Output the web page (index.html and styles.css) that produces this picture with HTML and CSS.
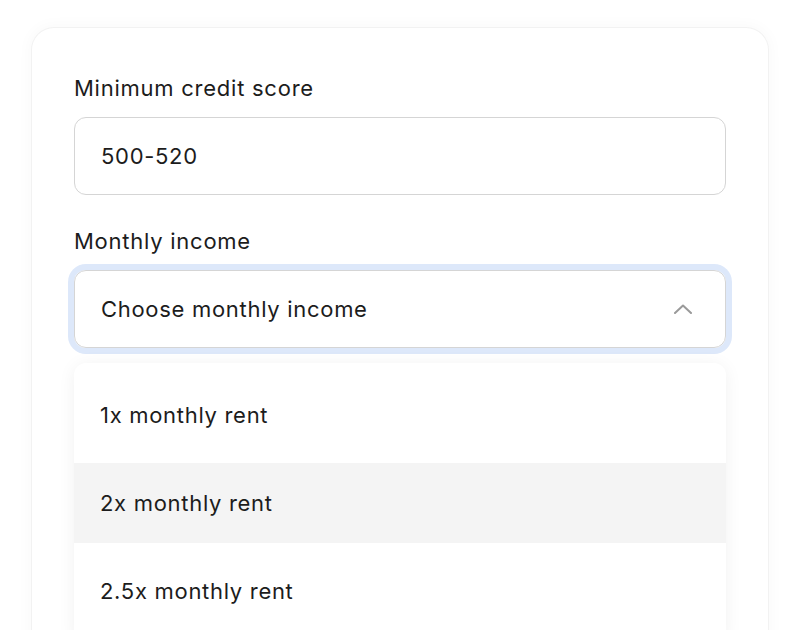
FILE: index.html
```html
<!DOCTYPE html>
<html lang="en">
<head>
<meta charset="utf-8">
<title>Filters</title>
<link rel="stylesheet" href="styles.css">
</head>
<body>
<div class="card">
  <div class="field">
    <label class="label">Minimum credit score</label>
    <div class="input">500-520</div>
  </div>
  <div class="field">
    <label class="label">Monthly income</label>
    <div class="select">
      <span>Choose monthly income</span>
      <svg class="chev" width="20" height="10" viewBox="0 0 20 10"><path d="M2 9 L10 1.5 L18 9" fill="none" stroke="#9a9a9a" stroke-width="2" stroke-linecap="round" stroke-linejoin="round"/></svg>
    </div>
    <ul class="menu">
      <li class="item">1x monthly rent</li>
      <li class="item hover">2x monthly rent</li>
      <li class="item">2.5x monthly rent</li>
    </ul>
  </div>
</div>
</body>
</html>
```
FILE: styles.css
```css
html, body { margin: 0; padding: 0; background: #ffffff; }
body {
  font-family: Inter, "Noto Sans", "Liberation Sans", sans-serif;
  color: #1c1c1c;
  height: 630px;
  overflow: hidden;
}
.card {
  margin: 28px 32px 0;
  border-radius: 22px;
  background: #fff;
  box-shadow: 0 0 0 1px #f2f2f2, 0 0 14px 4px rgba(0,0,0,0.025);
  padding: 45px 42px 60px;
  min-height: 700px;
}
.field { display: flex; flex-direction: column; }
.field + .field { margin-top: 31px; }
.label {
  font-size: 22px;
  letter-spacing: 0.75px;
  line-height: 30px;
  margin-bottom: 14px;
  color: #1c1c1c;
}
.input, .select {
  height: 76px;
  border: 1.5px solid #d5d5d5;
  border-radius: 12px;
  padding: 0 26px;
  display: flex;
  align-items: center;
  font-size: 22px;
  letter-spacing: 0.7px;
  color: #1c1c1c;
}
.select {
  justify-content: space-between;
  box-shadow: 0 0 0 6px #dde8fa;
  padding-right: 32px;
}
.chev { display: block; }
.menu {
  list-style: none;
  margin: 15px 0 0;
  padding: 12px 0;
  background: #fff;
  border-radius: 12px;
  box-shadow: 0 2px 18px rgba(0,0,0,0.06);
  display: flex;
  flex-direction: column;
  gap: 8px;
}
.item {
  height: 80px;
  display: flex;
  align-items: center;
  padding: 0 26px;
  font-size: 22px;
  letter-spacing: 0.7px;
  color: #1c1c1c;
}
.item.hover { background: #f4f4f4; }
```
